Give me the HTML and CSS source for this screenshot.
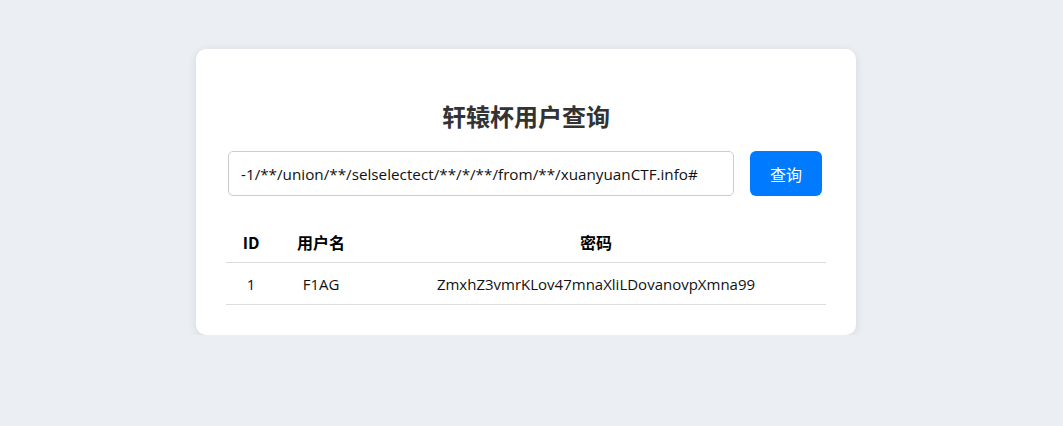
FILE: index.html
```html
<!DOCTYPE HTML>
<html lang="zh-CN">
<head>
  <meta charset="UTF-8">
  <title>轩辕杯用户查询</title>
  <link rel="stylesheet" href="styles.css">
</head>
<body>
  <div class="card">
    <h2 class="title">轩辕杯用户查询</h2>
    <form class="search">
      <input class="search-input" type="text" value="-1/**/union/**/selselectect/**/*/**/from/**/xuanyuanCTF.info#">
      <button class="search-btn" type="button">查询</button>
    </form>
    <table class="result">
      <thead>
        <tr>
          <th class="col-id">ID</th>
          <th class="col-name">用户名</th>
          <th>密码</th>
        </tr>
      </thead>
      <tbody>
        <tr>
          <td>1</td>
          <td>F1AG</td>
          <td>ZmxhZ3vmrKLov47mnaXliLDovanovpXmna99</td>
        </tr>
      </tbody>
    </table>
  </div>
</body>
</html>
```

FILE: styles.css
```css
body {
    background-color: #ebeef2;
    color: #222;
    font-family: "Open Sans", "Noto Sans CJK SC", sans-serif;
    margin: 0;
}

/* card */
.card {
    background-color: #fff;
    border-radius: 10px;
    box-shadow: 0 2px 10px rgba(0,0,0,.1);
    box-sizing: border-box;
    margin: 49px 0 0 196px;
    padding: 30px;
    width: 660px;
}
.title {
    color: #333;
    font-family: "Noto Sans CJK SC", sans-serif;
    font-size: 24px;
    font-weight: bold;
    line-height: 29px;
    margin: 22px 0 21px;
    text-align: center;
}

/* search form */
.search {
    display: flex;
    gap: 16px;
    margin: 0 0 0 2px;
}
.search-input {
    border: solid 1px #ccc;
    border-radius: 5px;
    box-sizing: border-box;
    color: #111;
    font-family: "Open Sans", "Noto Sans CJK SC", sans-serif;
    font-size: 15.25px;
    height: 45px;
    padding: 0 12px;
    width: 506px;
}
.search-btn {
    background-color: #007bff;
    border: none;
    border-radius: 6px;
    color: #fff;
    font-family: "Noto Sans CJK SC", sans-serif;
    font-size: 16px;
    height: 45px;
    width: 72px;
}

/* result table */
.result {
    border-collapse: collapse;
    font-size: 15px;
    margin-top: 26px;
    width: 100%;
}
.result th,
.result td {
    border-bottom: solid 1px #ddd;
    line-height: 18px;
    text-align: center;
}
.result th {
    color: #000;
    font-family: "Noto Sans CJK SC", sans-serif;
    font-size: 16px;
    font-weight: bold;
    padding: 11px 0 11px;
}
.result td {
    color: #111;
    padding: 12px 0 11px;
}
.col-id {
    width: 50px;
}
.col-name {
    width: 90px;
}
```
